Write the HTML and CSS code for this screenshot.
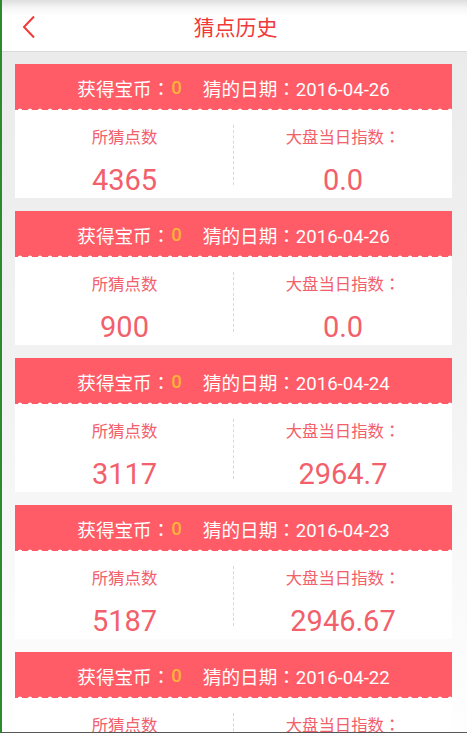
FILE: index.html
```html
<!DOCTYPE html>
<html lang="zh-CN">
<head>
<meta charset="utf-8">
<title>猜点历史</title>
<link rel="stylesheet" href="styles.css">
</head>
<body>
<div class="page">
  <header class="topbar">
    <a class="back" href="#" aria-label="返回">
      <svg width="14" height="24" viewBox="0 0 14 24"><path d="M12 1.5 L2 12 L12 22.5" fill="none" stroke="#f03a3a" stroke-width="2"/></svg>
    </a>
    <h1 class="title">猜点历史</h1>
    <span class="spacer"></span>
  </header>
  <main class="list">
    <section class="card">
      <div class="card-head"><span>获得宝币：</span><span class="coin">0</span><span>猜的日期：2016-04-26</span></div>
      <div class="card-body">
        <div class="col"><div class="label">所猜点数</div><div class="value">4365</div></div>
        <div class="col"><div class="label">大盘当日指数：</div><div class="value">0.0</div></div>
      </div>
    </section>
    <section class="card">
      <div class="card-head"><span>获得宝币：</span><span class="coin">0</span><span>猜的日期：2016-04-26</span></div>
      <div class="card-body">
        <div class="col"><div class="label">所猜点数</div><div class="value">900</div></div>
        <div class="col"><div class="label">大盘当日指数：</div><div class="value">0.0</div></div>
      </div>
    </section>
    <section class="card">
      <div class="card-head"><span>获得宝币：</span><span class="coin">0</span><span>猜的日期：2016-04-24</span></div>
      <div class="card-body">
        <div class="col"><div class="label">所猜点数</div><div class="value">3117</div></div>
        <div class="col"><div class="label">大盘当日指数：</div><div class="value">2964.7</div></div>
      </div>
    </section>
    <section class="card">
      <div class="card-head"><span>获得宝币：</span><span class="coin">0</span><span>猜的日期：2016-04-23</span></div>
      <div class="card-body">
        <div class="col"><div class="label">所猜点数</div><div class="value">5187</div></div>
        <div class="col"><div class="label">大盘当日指数：</div><div class="value">2946.67</div></div>
      </div>
    </section>
    <section class="card">
      <div class="card-head"><span>获得宝币：</span><span class="coin">0</span><span>猜的日期：2016-04-22</span></div>
      <div class="card-body">
        <div class="col"><div class="label">所猜点数</div><div class="value">4200</div></div>
        <div class="col"><div class="label">大盘当日指数：</div><div class="value">2959.2</div></div>
      </div>
    </section>
  </main>
</div>
</body>
</html>
```
FILE: styles.css
```css
* { box-sizing: border-box; }
html, body { margin: 0; padding: 0; }
body {
  font-family: Roboto, "Noto Sans CJK TC", "Noto Sans", sans-serif;
}
.page {
  height: 733px;
  overflow: hidden;
  border-left: 2px solid #2a8c2a;
  border-bottom: 1px solid #585858;
  background: linear-gradient(#ebebeb 8%, #f2f2f2 50%, #fefefe 100%);
}
.topbar {
  height: 52px;
  display: flex;
  align-items: center;
  background: linear-gradient(#dedede 0, #f6f6f6 8px, #ffffff 16px);
  border-bottom: 1px solid #d9d9d9;
  padding: 0 18px 0 20px;
}
.back { display: flex; width: 40px; padding-top: 2px; }
.title {
  flex: 1;
  margin: 0;
  text-align: center;
  font-size: 21px;
  font-weight: normal;
  color: #f03a3a;
  font-family: "Noto Sans CJK SC", sans-serif;
  line-height: 1;
  padding-top: 1px;
}
.spacer { width: 40px; }
.list {
  padding: 12px 15px 0 13px;
  display: flex;
  flex-direction: column;
  gap: 13px;
}
.card { display: flex; flex-direction: column; }
.card-head {
  height: 46px;
  display: flex;
  align-items: center;
  justify-content: center;
  color: #ffffff;
  font-size: 18.6px;
  font-family: Roboto, "Noto Sans CJK TC", sans-serif;
  font-feature-settings: "locl" 0;
  padding-top: 1px;
  background:
    radial-gradient(circle at 5px 4px, #ffffff 2px, rgba(255,255,255,0) 2.8px) 0 100% / 10px 3px repeat-x,
    #ff5c67;
}
.card-head .coin {
  color: #ffb238;
  font-weight: 500;
  margin: 0 21px 0 1px;
}
.card-body {
  height: 88px;
  background: #ffffff;
  display: flex;
  padding: 15px 0 0;
}
.col {
  flex: 1;
  display: flex;
  flex-direction: column;
  align-items: center;
}
.col:first-child {
  border-right: 1px dashed #d8d8d8;
  height: 60px;
}
.col:first-child .value, .col:first-child .label { margin-right: -1px; }
.label {
  font-size: 16.4px;
  line-height: 22px;
  color: #f2606b;
  font-family: "Noto Sans CJK TC", sans-serif;
  font-feature-settings: "locl" 0;
}
.value {
  margin-top: 16px;
  font-size: 29px;
  line-height: 34px;
  color: #f2606b;
  font-family: Roboto, sans-serif;
}
```
